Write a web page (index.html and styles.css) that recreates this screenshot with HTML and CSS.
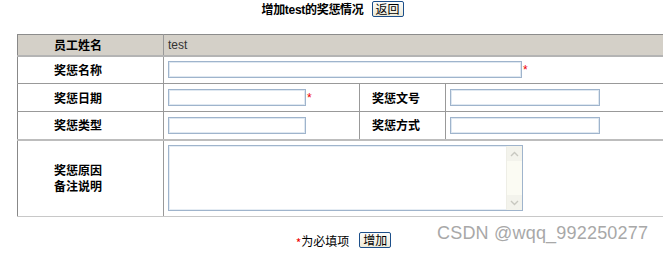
FILE: index.html
```html
<!DOCTYPE html>
<html lang="zh-CN">
<head>
    <meta charset="UTF-8" />
    <title>增加奖惩情况</title>
    <link rel="stylesheet" href="styles.css">
</head>
<body>
    <div class="title">
        <span class="title-text">增加test的奖惩情况</span>
        <button type="button" class="btn">返回</button>
    </div>
    <form class="form">
        <table class="grid">
            <colgroup>
                <col class="c1"><col class="c2"><col class="c3"><col class="c4">
            </colgroup>
            <tr class="head">
                <th>员工姓名</th>
                <td colspan="3">test</td>
            </tr>
            <tr class="row">
                <th>奖惩名称</th>
                <td colspan="3"><input type="text" class="ipt wide"><span class="req">*</span></td>
            </tr>
            <tr class="row">
                <th>奖惩日期</th>
                <td><input type="text" class="ipt short"><span class="req">*</span></td>
                <th class="th2">奖惩文号</th>
                <td><input type="text" class="ipt mid"></td>
            </tr>
            <tr class="row">
                <th>奖惩类型</th>
                <td><input type="text" class="ipt short"></td>
                <th class="th2">奖惩方式</th>
                <td><input type="text" class="ipt mid"></td>
            </tr>
            <tr class="tall">
                <th class="th-multi">奖惩原因<br>备注说明</th>
                <td colspan="3">
                    <div class="area-wrap">
                        <textarea class="area"></textarea>
                        <div class="sbar">
                            <span class="sbtn">
                                <svg width="9" height="6" viewBox="0 0 9 6"><path d="M1 5 L4.5 1.5 L8 5" fill="none" stroke="#c8c8c0" stroke-width="1.4"/></svg>
                            </span>
                            <span class="sbtn">
                                <svg width="9" height="6" viewBox="0 0 9 6"><path d="M1 1 L4.5 4.5 L8 1" fill="none" stroke="#c8c8c0" stroke-width="1.4"/></svg>
                            </span>
                        </div>
                    </div>
                </td>
            </tr>
        </table>
        <div class="foot">
            <span class="note"><span class="req">*</span>为必填项</span>
            <button type="submit" class="btn">增加</button>
        </div>
    </form>
    <div class="mark">CSDN @wqq_992250277</div>
</body>
</html>
```

FILE: styles.css
```css
html {
    overflow: hidden;
}
body {
    margin: 0;
    padding: 0;
    background: #fff;
    font-family: "Liberation Sans", "Noto Sans CJK SC", sans-serif;
    font-size: 12px;
    color: #000;
    position: relative;
    height: 254px;
}
.title {
    display: flex;
    justify-content: center;
    align-items: center;
    gap: 8px;
    height: 17px;
    padding-left: 2px;
}
.title-text {
    font-weight: bold;
    font-size: 12px;
    letter-spacing: -0.3px;
}
.btn {
    font-family: "Noto Sans CJK SC", sans-serif;
    font-size: 12px;
    line-height: 12px;
    height: 16px;
    padding: 0 3px;
    background: linear-gradient(#fdfdfb, #ece9d8);
    border: 1px solid #1c4f8a;
    border-radius: 2px;
    color: #000;
    cursor: pointer;
}
.form {
    margin: 17px 0 0 17px;
}
.grid {
    width: 720px;
    border-collapse: collapse;
    table-layout: fixed;
}
.c1 { width: 146px; }
.c2 { width: 196px; }
.c3 { width: 86px; }
.grid th,
.grid td {
    border: 1px solid #999;
    padding: 0 0 0 4px;
    text-align: left;
}
.grid th {
    font-family: "Noto Sans CJK SC", sans-serif;
    font-size: 12px;
    font-weight: bold;
    padding-left: 36px;
    line-height: 14px;
}
.grid th.th2 {
    padding-left: 12px;
}
.grid th.th-multi {
    line-height: 16px;
}
.grid td:first-child,
.grid th:first-child {
    border-left: 1px solid #888;
}
.head {
    height: 21px;
    background: #d4d0c8;
}
.head th,
.head td {
    border-top: 1px solid #8c8c8c;
    border-bottom: 2px solid #b4b4b4;
}
.head td {
    color: #333;
}
.row {
    height: 28px;
}
.tall {
    height: 77px;
}
.tall th,
.tall td {
    border-top: 2px solid #bdbdbd;
    border-bottom: 1px solid #c8c8c8;
}
.ipt {
    box-sizing: border-box;
    height: 17px;
    border: 1px solid #9fb4cc;
    box-shadow: inset 0 0 0 1px #dfe8f1;
    padding: 0 2px;
    vertical-align: middle;
    outline: none;
}
.wide { width: 354px; }
.short { width: 138px; }
.mid { width: 150px; }
.req {
    color: #e00;
    font-size: 12px;
    vertical-align: middle;
    margin-left: 1px;
}
.area-wrap {
    position: relative;
    width: 355px;
    height: 66px;
}
.area {
    box-sizing: border-box;
    width: 355px;
    height: 66px;
    border: 1px solid #9fb4cc;
    box-shadow: inset 0 0 0 1px #e6edf4;
    resize: none;
    display: block;
    outline: none;
}
.sbar {
    position: absolute;
    right: 1px;
    top: 1px;
    bottom: 1px;
    width: 15px;
    background: #fbfbf3;
    border-left: 1px solid #eeeee6;
    display: flex;
    flex-direction: column;
    justify-content: space-between;
}
.sbtn {
    height: 15px;
    background: #f3f3ec;
    display: flex;
    align-items: center;
    justify-content: center;
}
.foot {
    display: flex;
    justify-content: center;
    align-items: center;
    gap: 10px;
    margin: 13px 0 0 0;
    padding-left: 6px;
}
.note {
    font-family: "Noto Sans CJK SC", sans-serif;
    font-size: 12px;
    line-height: 14px;
    padding-top: 4px;
}
.mark {
    position: absolute;
    left: 437px;
    top: 223px;
    font-family: "Liberation Sans", sans-serif;
    font-size: 18px;
    color: #a8a8a8;
    letter-spacing: 0.2px;
}
```
